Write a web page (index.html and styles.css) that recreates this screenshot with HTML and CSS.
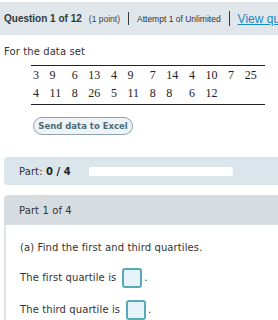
FILE: index.html
```html
<!DOCTYPE html>
<html>
<head>
<meta charset="utf-8">
<link rel="stylesheet" href="styles.css">
</head>
<body>
<div class="topbar">
  <span class="qnum">Question 1 of 12</span>
  <span class="points">(1 point)</span>
  <span class="sep sep-short"></span>
  <span class="attempt">Attempt 1 of Unlimited</span>
  <span class="sep"></span>
  <a class="viewq" href="#">View que</a>
</div>

<div class="intro">For the data set</div>

<div class="datawrap">
  <table class="datatable">
    <tr><td>3</td><td>9</td><td>6</td><td>13</td><td>4</td><td>9</td><td>7</td><td>14</td><td>4</td><td>10</td><td>7</td><td>25</td></tr>
    <tr><td>4</td><td>11</td><td>8</td><td>26</td><td>5</td><td>11</td><td>8</td><td>8</td><td>6</td><td>12</td><td></td><td></td></tr>
  </table>
</div>

<div class="btnrow"><button class="excel">Send data to Excel</button></div>

<div class="partbar">
  <span class="partlabel">Part: <b>0 / 4</b></span>
  <span class="progress"></span>
</div>

<div class="part">
  <div class="parthead">Part 1 of 4</div>
  <div class="partbody">
    <p class="prompt">(a) Find the first and third quartiles.</p>
    <p class="answer">The first quartile is <span class="box"></span>.</p>
    <p class="answer answer2">The third quartile is <span class="box"></span>.</p>
  </div>
</div>
</body>
</html>
```

FILE: styles.css
```css
html, body {
  margin: 0;
  padding: 0;
  background: #ffffff;
  overflow: hidden;
}
body {
  width: 278px;
  height: 320px;
  font-family: "DejaVu Sans", Verdana, sans-serif;
  font-size: 10px;
  letter-spacing: 0.1px;
  color: #333;
}
.topbar {
  margin-top: 2px;
  height: 33px;
  background: #e0e6e9;
  display: flex;
  align-items: center;
  padding-left: 4px;
  white-space: nowrap;
  overflow: hidden;
  font-family: "Liberation Sans", Arial, sans-serif;
  letter-spacing: 0;
  color: #333;
}
.topbar > * {
  flex-shrink: 0;
}
.qnum {
  font-weight: bold;
  font-size: 10px;
  color: #2d3a40;
}
.points {
  font-size: 8.5px;
  margin-left: 7px;
  color: #444;
}
.sep {
  display: inline-block;
  width: 1px;
  height: 15px;
  background: #2f3a40;
  margin: 0 8px 0 8px;
}
.sep-short {
  height: 13px;
}
.attempt {
  font-size: 8.5px;
  letter-spacing: 0;
  color: #333;
}
.viewq {
  font-size: 12px;
  color: #1a8ac2;
  text-decoration: underline;
}
.intro {
  padding-left: 4px;
  margin-top: 11px;
  line-height: 12px;
}
.datawrap {
  display: inline-block;
  margin: 7px 0 0 31px;
  border-top: 1px solid #222;
  border-bottom: 1px solid #222;
  padding: 0 0 2px 0;
}
.datatable {
  border-collapse: collapse;
  font-family: "Liberation Serif", "Times New Roman", serif;
  font-size: 12px;
  letter-spacing: 0;
  color: #222;
}
.datatable td {
  padding: 0 8.6px 0 2px;
  height: 18px;
  line-height: 18px;
  vertical-align: middle;
}
.btnrow {
  margin: 10px 0 0 33px;
}
.excel {
  display: block;
  font-family: "DejaVu Sans", Verdana, sans-serif;
  font-size: 8.5px;
  font-weight: bold;
  color: #4f6b78;
  background: #eef3f5;
  border: 1px solid #8ea3ad;
  border-radius: 9px;
  height: 18px;
  width: 100px;
  padding: 0;
  letter-spacing: 0;
  line-height: 16px;
}
.partbar {
  margin: 22px 0 0 4px;
  height: 28px;
  background: #dbe5ec;
  border-radius: 4px 0 0 4px;
  display: flex;
  align-items: center;
  padding-left: 15px;
}
.partlabel {
  color: #333;
  width: 70px;
}
.partlabel b {
  font-weight: bold;
  color: #222;
}
.progress {
  display: inline-block;
  width: 144px;
  height: 9px;
  background: #ffffff;
  border-radius: 2px;
}
.part {
  margin: 10px 0 0 4px;
}
.parthead {
  height: 30px;
  background: #d6dcdf;
  border-radius: 4px 0 0 0;
  display: flex;
  align-items: center;
  padding-left: 15px;
  color: #333;
}
.partbody {
  border-left: 2px solid #e2e4e6;
  padding: 16px 0 20px 14px;
}
.prompt {
  margin: 0;
  line-height: 14px;
}
.answer {
  margin: 13px 0 0 0;
  display: flex;
  align-items: center;
  line-height: 14px;
}
.answer2 {
  margin-top: 12px;
}
.box {
  display: inline-block;
  width: 16px;
  height: 16px;
  border: 2px solid #5aa9b6;
  border-radius: 3px;
  background: #e6f4f8;
  margin: 0 2px 0 6px;
}
```
